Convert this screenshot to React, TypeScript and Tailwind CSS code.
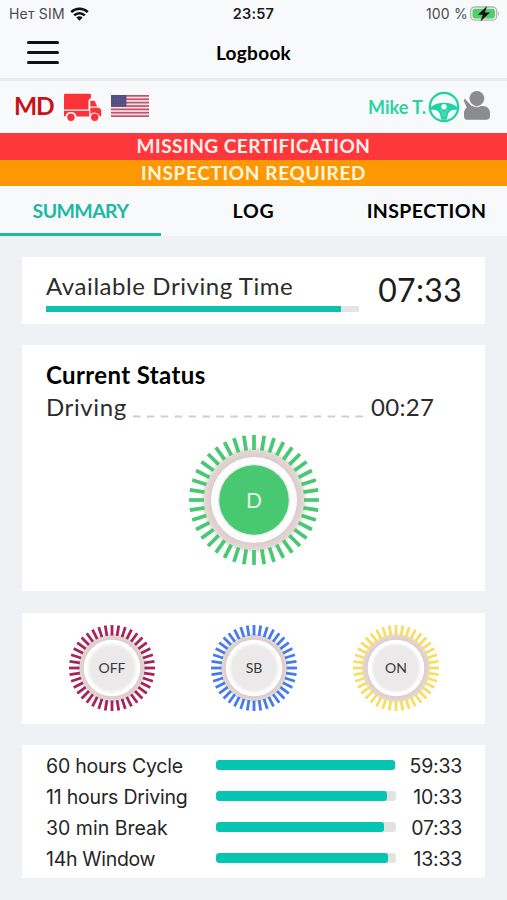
import { Fragment } from 'react';

interface DialProps {
  label: string;
  size: number;
  color: string;
  tickInner: number;
  tickOuter: number;
  tickWidth: number;
  active?: boolean;
}

const TICKS = Array.from({ length: 40 }, (_, i) => i * 9);

const limits = [
  { label: '60 hours Cycle', time: '59:33', percent: 99.4, spacing: 'tracking-[-0.2px]' },
  { label: '11 hours Driving', time: '10:33', percent: 95, spacing: 'tracking-[-0.2px]' },
  { label: '30 min Break', time: '07:33', percent: 93.6, spacing: 'tracking-[0px]' },
  { label: '14h Window', time: '13:33', percent: 95.8, spacing: 'tracking-[-0.3px]' },
];

function Dial({ label, size, color, tickInner, tickOuter, tickWidth, active }: DialProps) {
  return (
    <svg width={size} height={size} viewBox={`${-size / 2} ${-size / 2} ${size} ${size}`} className="block">
      <defs>
        <radialGradient id={`face-${label}`}>
          <stop offset="0.76" stopColor="#ebe9ea" />
          <stop offset="0.92" stopColor="#ffffff" />
        </radialGradient>
        <radialGradient id={`ring-${label}`}>
          <stop offset="0.8" stopColor="#dacbc9" />
          <stop offset="0.92" stopColor="#e2d6d4" />
          <stop offset="1" stopColor="#f8f4f4" />
        </radialGradient>
      </defs>
      <circle r={active ? 53 : 35} fill={`url(#ring-${label})`} />
      {TICKS.map((angle) => (
        <line
          key={angle}
          y1={-tickInner}
          y2={-tickOuter}
          stroke={color}
          strokeWidth={tickWidth}
          transform={`rotate(${angle})`}
        />
      ))}
      {active ? (
        <>
          <circle r="43" fill="#fdfcfc" />
          <circle r="36" fill="#e6e5e5" />
          <circle r="34.7" fill={color} />
        </>
      ) : (
        <circle r="28.3" fill={`url(#face-${label})`} />
      )}
      <text
        y={active ? 7.5 : 4.8}
        textAnchor="middle"
        fill={active ? '#e6f8ec' : '#3a3a3a'}
        className={active ? "font-['Lato'] text-[21px]" : "font-['Lato'] text-[14px]"}
      >
        {label}
      </text>
    </svg>
  );
}

function StatusBar() {
  return (
    <div className="flex h-[27px] items-center justify-between pl-[9px] pr-[6px] font-['Inter'] text-[14px] text-[#4a4a4c]">
      <div className="flex w-[150px] items-center gap-[5px]">
        <span className="tracking-[0.2px]">Нет SIM</span>
        <svg width="19" height="14" viewBox="0 0 19 14" fill="none" stroke="#111" strokeWidth="2.6">
          <path d="M1.2 5.1a12 12 0 0 1 16.6 0" />
          <path d="M4.2 8.4a7.6 7.6 0 0 1 10.6 0" />
          <path d="M6.4 10.6a4.4 4.4 0 0 1 6.2 0L9.5 13.8z" fill="#111" stroke="none" />
        </svg>
      </div>
      <span className="pr-[3px] text-[14.5px] font-semibold tracking-[0.2px] text-[#1b1b1d]">23:57</span>
      <div className="flex w-[150px] items-center justify-end gap-[2px]">
        <span className="text-[14px] tracking-[0.2px]">100 %</span>
        <svg width="31" height="16" viewBox="0 0 31 16">
          <rect x="0.7" y="1" width="26" height="13.2" rx="4" fill="#e9f3ec" stroke="#b4b7b8" strokeWidth="1.3" />
          <rect x="2.5" y="2.8" width="22.4" height="9.6" rx="2.4" fill="#54cf68" />
          <path d="M28.2 5.3q2 2.3 0 4.6z" fill="#b0b2b4" />
          <path d="M16.6 0.8 8.4 8.6h4.8l-2.3 6.2 8.4-8h-4.9z" fill="#111" stroke="#111" strokeWidth="0.5" />
        </svg>
      </div>
    </div>
  );
}

function TruckIcon() {
  return (
    <svg width="38" height="29" viewBox="0 0 38 29" fill="#fb3338">
      <path d="M1.2 0.8h24.8a1 1 0 0 1 1 1V5a4 4 0 0 0-2.6 4v7.5H0V2a1.2 1.2 0 0 1 1.2-1.2z" />
      <path d="M0 17.8h25.2v5.6H12.7a5.9 5.9 0 0 0-11.4 0H1a1 1 0 0 1-1-1z" />
      <path d="M26.3 8.8q0-1 1-1h3.2l2.8 5.6h-7z" />
      <path d="M26.3 14.8h8.8l2.1 2.2v5.4a1 1 0 0 1-1 1h-.4a5.9 5.9 0 0 0-9.5-2.4z" />
      <circle cx="7" cy="24.2" r="3.7" />
      <circle cx="30.7" cy="24.2" r="3.7" />
    </svg>
  );
}

function FlagIcon() {
  return (
    <svg width="38" height="22" viewBox="0 0 38 22">
      <rect width="38" height="22" fill="#f3e4e8" />
      {[0, 1, 2, 3, 4, 5, 6].map((i) => (
        <rect key={i} y={i * 3.38} width="38" height="1.7" fill="#c65268" />
      ))}
      <rect width="15.4" height="11.8" fill="#504e82" />
      {[2, 4.5, 7, 9.5].map((y) => (
        <path key={y} d={`M1.5 ${y}h13`} stroke="#7775a0" strokeWidth="0.6" strokeDasharray="0.8 1.4" />
      ))}
    </svg>
  );
}

function WheelIcon() {
  return (
    <svg width="32" height="32" viewBox="0 0 32 32" fill="none">
      <circle cx="16" cy="16" r="14.2" stroke="#20d3a4" strokeWidth="2.3" />
      <path
        d="M2.8 16C8 12.4 12 11.8 16 11.8s8 .6 13.2 4.2l-.4 2.9c-4-.6-7.6 1-8.6 3.6l-1.6 6.3h-5.2l-1.6-6.3c-1-2.6-4.6-4.2-8.6-3.6z"
        fill="#20d3a4"
      />
      <circle cx="16" cy="15.8" r="2.8" fill="#f7f9fb" />
      <path d="M11.6 18.9q2.3.2 3 2.1l.5 4.5M20.4 18.9q-2.3.2-3 2.1l-.5 4.5" stroke="#9eead4" strokeWidth="0.7" />
    </svg>
  );
}

function DriverIcon() {
  return (
    <svg width="28" height="30" viewBox="0 0 28 30" fill="#8c8b90">
      <circle cx="13.9" cy="7.5" r="7.4" />
      <path d="M1.8 7.8 8.7 15h11.4c4 0 6.9 3 6.9 7v3.2c0 2-1.4 3.6-3.8 3.6H4.6c-2.2 0-3.6-1.4-3.6-3.4V22c0-2.2.9-4 2.8-5.6L.6 9.2z" />
      <path d="M7 11.7q2.9 4.3 6.9 4.3t6.9-4.3" fill="none" stroke="#f7f9fb" strokeWidth="0.9" />
    </svg>
  );
}

export default function App() {
  return (
    <div className="h-[900px] w-[507px] overflow-hidden bg-[#eff1f5] font-['Lato',sans-serif] text-black">
      <div className="bg-[#f7f9fb]">
        <StatusBar />

        {/* Header */}
        <div className="flex h-[54px] items-center border-b-[3px] border-[#e9ebed] pl-[27px]">
          <button className="flex w-[32px] flex-col gap-[7px]">
            <span className="h-[2.7px] rounded-full bg-[#111]" />
            <span className="h-[2.7px] rounded-full bg-[#111]" />
            <span className="h-[2.7px] rounded-full bg-[#111]" />
          </button>
          <h1 className="flex-1 pr-[59px] pt-[2px] text-center text-[19px] font-bold tracking-[0.3px]">Logbook</h1>
        </div>

        {/* Driver row */}
        <div className="flex h-[52px] items-center pl-[14px] pr-[16px]">
          <span className="w-[50px] pb-[1px] text-[24.5px] font-bold tracking-[-1.2px] text-[#c51318]">MD</span>
          <TruckIcon />
          <div className="ml-[9px] pb-[2px]">
            <FlagIcon />
          </div>
          <span className="ml-auto mr-[2px] text-[18px] font-bold tracking-[0px] text-[#2bd3a3]">Mike T.</span>
          <WheelIcon />
          <div className="ml-[3px] pb-[2px]">
            <DriverIcon />
          </div>
        </div>
      </div>

      {/* Alerts */}
      <div className="h-[27px] bg-[#fe373a] text-center text-[19px] font-bold leading-[26px] tracking-[0.5px] text-[#fff0ee]">
        MISSING CERTIFICATION
      </div>
      <div className="h-[26px] bg-[#fd9802] text-center text-[19px] font-bold leading-[26px] tracking-[0.65px] text-[#fff6df]">
        INSPECTION REQUIRED
      </div>

      {/* Tabs */}
      <div className="flex h-[50px] bg-[#f7f9fb] text-center text-[19.5px] font-bold leading-[50px]">
        <div className="w-[161px] border-b-[3px] border-[#1fb8a5] tracking-[-0.6px] text-[#1fb8a0]">SUMMARY</div>
        <div className="w-[185px] tracking-[0.8px]">LOG</div>
        <div className="w-[161px] tracking-[0.4px]">INSPECTION</div>
      </div>

      <div className="px-[22px] pt-[21px]">
        {/* Available driving time */}
        <div className="flex h-[67px] w-[463px] items-start bg-white pl-[24px] pr-[23px] pt-[14px]">
          <div className="w-[313px]">
            <div className="whitespace-nowrap text-[24px] leading-[30px] tracking-[0.57px] text-[#2c2c2c]">
              Available Driving Time
            </div>
            <div className="mt-[5px] h-[6px] bg-[#e4e4e4]">
              <div className="h-full w-[94.2%] bg-[#0cc2ad]" />
            </div>
          </div>
          <div className="ml-auto text-[32px] leading-[37px] tracking-[0.3px] text-[#1c1c1c]">07:33</div>
        </div>

        {/* Current status */}
        <div className="mt-[21px] flex h-[246px] w-[463px] flex-col bg-white pl-[24px] pt-[15px]">
          <h2 className="text-[24px] font-bold leading-[30px] tracking-[0.38px]">Current Status</h2>
          <div className="flex h-[34px] text-[24px] leading-[34px] text-[#2c2c2c]">
            <span className="w-[87px] tracking-[0.6px]">Driving</span>
            <svg width="230" height="34" viewBox="0 0 230 34">
              <path d="M0 26.5h230" stroke="#cfcfcf" strokeWidth="2" strokeDasharray="7.5 6.4" />
            </svg>
            <span className="ml-[8px] tracking-[0.3px]">00:27</span>
          </div>
          <div className="mt-[10px] flex justify-center pr-[24px]">
            <Dial label="D" size={132} color="#49c872" tickInner={50} tickOuter={65} tickWidth={3.7} active />
          </div>
        </div>

        {/* Other statuses */}
        <div className="mt-[22px] flex h-[111px] w-[463px] items-center justify-center gap-[56px] bg-white pb-[1px]">
          <Dial label="OFF" size={86} color="#a5245a" tickInner={32.5} tickOuter={43} tickWidth={2.8} />
          <Dial label="SB" size={86} color="#467be8" tickInner={32.5} tickOuter={43} tickWidth={2.8} />
          <Dial label="ON" size={86} color="#f8dd64" tickInner={32.5} tickOuter={43} tickWidth={2.8} />
        </div>

        {/* Limits */}
        <div className="mt-[21px] grid h-[133px] w-[463px] auto-rows-[31px] grid-cols-[170px_180px_66px] items-center bg-white pl-[24px] pt-[5px] font-['Inter'] text-[19.5px] text-[#262626]">
          {limits.map((limit) => (
            <Fragment key={limit.label}>
              <span className={`pt-[2px] ${limit.spacing}`}>{limit.label}</span>
              <div className="mb-[1px] h-[10px] overflow-hidden rounded-[3px] bg-[#e2e2e2]">
                <div className="h-full rounded-[3px] bg-[#05c5b2]" style={{ width: `${limit.percent}%` }} />
              </div>
              <span className="pt-[2px] text-right tracking-[-0.25px]">{limit.time}</span>
            </Fragment>
          ))}
        </div>
      </div>
    </div>
  );
}
